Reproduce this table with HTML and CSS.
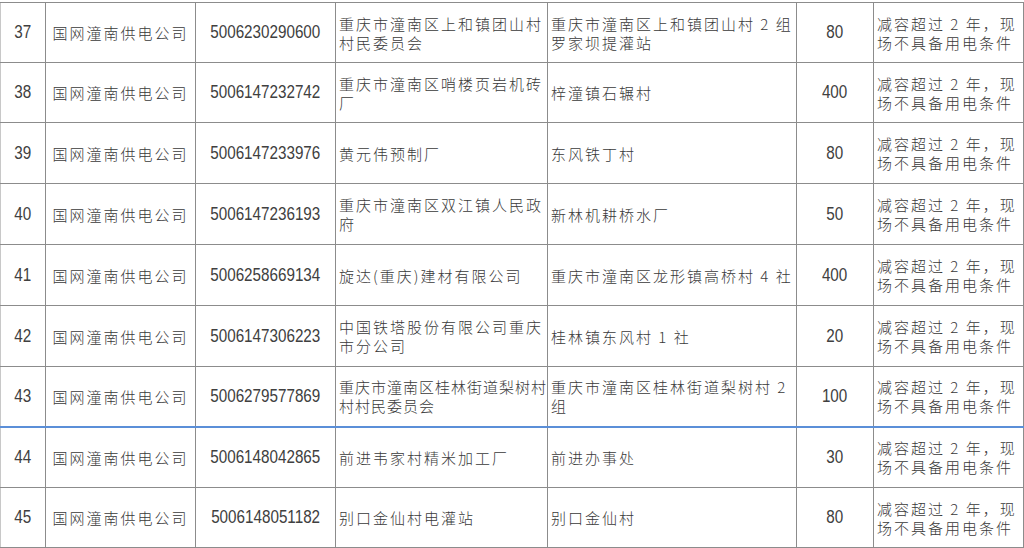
FILE: index.html
```html
<!DOCTYPE html>
<html lang="zh-CN">
<head>
<meta charset="utf-8">
<title>减容清单</title>
<link rel="stylesheet" href="styles.css">
</head>
<body>
<table class="sheet">
  <colgroup>
    <col class="c-no"><col class="c-org"><col class="c-acct"><col class="c-name"><col class="c-loc"><col class="c-cap"><col class="c-reason">
  </colgroup>
  <tbody>
    <tr class="r60">
      <td class="num"><span>37</span></td><td class="org">国网潼南供电公司</td><td class="num"><span>5006230290600</span></td>
      <td class="txt">重庆市潼南区上和镇团山村<br>村民委员会</td>
      <td class="txt">重庆市潼南区上和镇团山村 2 组<br>罗家坝提灌站</td>
      <td class="num"><span>80</span></td><td class="txt">减容超过 2 年，现<br>场不具备用电条件</td>
    </tr>
    <tr class="r60">
      <td class="num"><span>38</span></td><td class="org">国网潼南供电公司</td><td class="num"><span>5006147232742</span></td>
      <td class="txt">重庆市潼南区哨楼页岩机砖<br>厂</td>
      <td class="txt">梓潼镇石辗村</td>
      <td class="num"><span>400</span></td><td class="txt">减容超过 2 年，现<br>场不具备用电条件</td>
    </tr>
    <tr class="r61">
      <td class="num"><span>39</span></td><td class="org">国网潼南供电公司</td><td class="num"><span>5006147233976</span></td>
      <td class="txt">黄元伟预制厂</td>
      <td class="txt">东风铁丁村</td>
      <td class="num"><span>80</span></td><td class="txt">减容超过 2 年，现<br>场不具备用电条件</td>
    </tr>
    <tr class="r61">
      <td class="num"><span>40</span></td><td class="org">国网潼南供电公司</td><td class="num"><span>5006147236193</span></td>
      <td class="txt">重庆市潼南区双江镇人民政<br>府</td>
      <td class="txt">新林机耕桥水厂</td>
      <td class="num"><span>50</span></td><td class="txt">减容超过 2 年，现<br>场不具备用电条件</td>
    </tr>
    <tr class="r61">
      <td class="num"><span>41</span></td><td class="org">国网潼南供电公司</td><td class="num"><span>5006258669134</span></td>
      <td class="txt">旋达(重庆)建材有限公司</td>
      <td class="txt">重庆市潼南区龙形镇高桥村 4 社</td>
      <td class="num"><span>400</span></td><td class="txt">减容超过 2 年，现<br>场不具备用电条件</td>
    </tr>
    <tr class="r61">
      <td class="num"><span>42</span></td><td class="org">国网潼南供电公司</td><td class="num"><span>5006147306223</span></td>
      <td class="txt">中国铁塔股份有限公司重庆<br>市分公司</td>
      <td class="txt">桂林镇东风村 1 社</td>
      <td class="num"><span>20</span></td><td class="txt">减容超过 2 年，现<br>场不具备用电条件</td>
    </tr>
    <tr class="r60">
      <td class="num"><span>43</span></td><td class="org">国网潼南供电公司</td><td class="num"><span>5006279577869</span></td>
      <td class="txt tight">重庆市潼南区桂林街道梨树村<br>村村民委员会</td>
      <td class="txt">重庆市潼南区桂林街道梨树村 2<br>组</td>
      <td class="num"><span>100</span></td><td class="txt">减容超过 2 年，现<br>场不具备用电条件</td>
    </tr>
    <tr class="r61 split">
      <td class="num"><span>44</span></td><td class="org">国网潼南供电公司</td><td class="num"><span>5006148042865</span></td>
      <td class="txt">前进韦家村精米加工厂</td>
      <td class="txt">前进办事处</td>
      <td class="num"><span>30</span></td><td class="txt">减容超过 2 年，现<br>场不具备用电条件</td>
    </tr>
    <tr class="r60">
      <td class="num"><span>45</span></td><td class="org">国网潼南供电公司</td><td class="num"><span>5006148051182</span></td>
      <td class="txt">别口金仙村电灌站</td>
      <td class="txt">别口金仙村</td>
      <td class="num"><span>80</span></td><td class="txt">减容超过 2 年，现<br>场不具备用电条件</td>
    </tr>
  </tbody>
</table>
</body>
</html>
```
FILE: styles.css
```css
html, body {
  margin: 0;
  padding: 0;
  background: #ffffff;
}
body {
  padding-top: 2px;
  overflow: hidden;
}
.sheet {
  border-collapse: collapse;
  table-layout: fixed;
  width: 1023px;
  color: #3a3a3a;
}
.c-no { width: 45px; }
.c-org { width: 150px; }
.c-acct { width: 140px; }
.c-name { width: 212px; }
.c-loc { width: 249px; }
.c-cap { width: 77px; }
.c-reason { width: 150px; }
.sheet td {
  border: 1px solid #8c8c8c;
  padding: 0 3px;
  vertical-align: middle;
  white-space: nowrap;
  overflow: hidden;
}
.sheet td:first-child {
  border-left-color: #c8c8c8;
}
.r60 { height: 60px; }
.r61 { height: 61px; }
.num {
  font-family: "Liberation Sans", Arial, sans-serif;
  font-size: 17.5px;
  text-align: center;
  color: #404040;
}
.num span {
  display: inline-block;
  transform: scaleX(0.87);
  transform-origin: center;
}
.org, .txt {
  font-family: "Noto Sans CJK SC", "Noto Sans", sans-serif;
  font-weight: 300;
  font-size: 15px;
  letter-spacing: 2px;
  line-height: 19px;
}
.org {
  text-align: center;
  padding: 0;
}
.txt {
  text-align: left;
}
.txt.tight {
  letter-spacing: 1px;
}
.split td {
  border-top: 2px solid #5b8fd8;
}
```
